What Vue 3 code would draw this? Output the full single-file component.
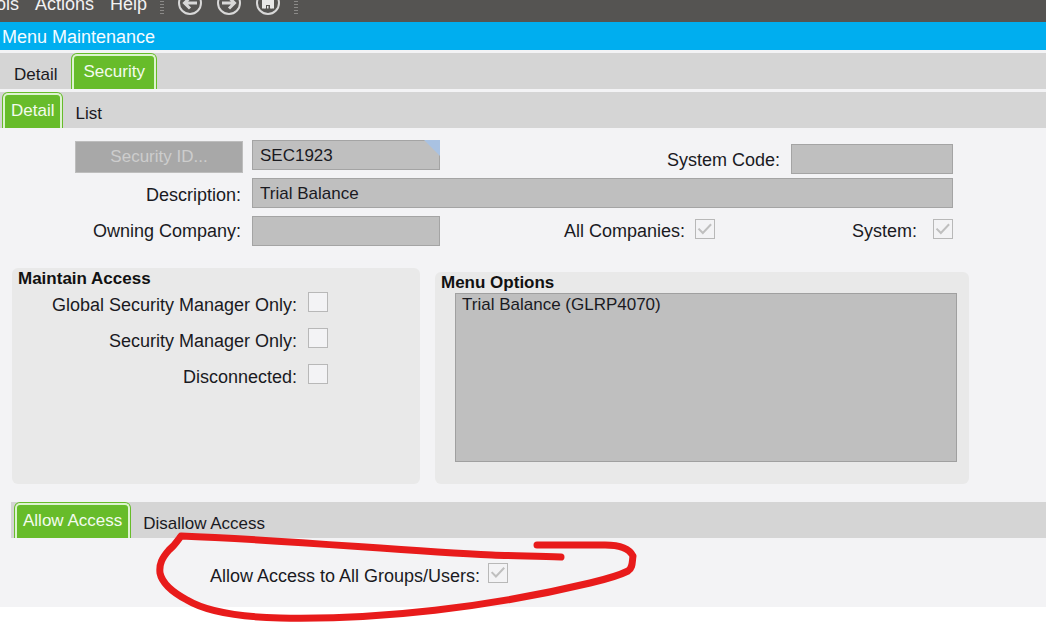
<script setup>
import { ref } from 'vue'

const mainTabs = ['Detail', 'Security']
const subTabs = ['Detail', 'List']
const accessTabs = ['Allow Access', 'Disallow Access']

const mainTab = ref('Security')
const subTab = ref('Detail')
const accessTab = ref('Allow Access')

const maintainOptions = [
  { id: 'global-manager', label: 'Global Security Manager Only:' },
  { id: 'manager', label: 'Security Manager Only:' },
  { id: 'disconnected', label: 'Disconnected:' }
]
const menuOptions = ['Trial Balance (GLRP4070)']
</script>

<template>
  <div class="page">
    <main class="window">
      <header class="toolbar">
        <nav class="menus">
          <button type="button">ols</button>
          <button type="button">Actions</button>
          <button type="button">Help</button>
        </nav>
        <span class="grip"></span>
        <div class="tools">
          <button type="button" aria-label="Back">
            <svg viewBox="0 0 26 26" width="26" height="26">
              <circle cx="13" cy="13" r="11" />
              <path class="arrow" d="M20 13H8M13 7.5L7.5 13L13 18.5" />
            </svg>
          </button>
          <button type="button" aria-label="Forward">
            <svg viewBox="0 0 26 26" width="26" height="26">
              <circle cx="13" cy="13" r="11" />
              <path class="arrow" d="M6 13H18M13 7.5L18.5 13L13 18.5" />
            </svg>
          </button>
          <button type="button" aria-label="Save">
            <svg viewBox="0 0 26 26" width="26" height="26">
              <circle cx="13" cy="13" r="11" />
              <path class="solid" d="M7 7H19V18.5H16.5V13.5H9.5V18.5H7Z" />
              <path class="solid" d="M9 12H17V18.5H15V15H11V18.5H9Z" />
              <path class="solid" d="M12 16H13.5V18.5H12Z" />
            </svg>
          </button>
        </div>
        <span class="grip"></span>
      </header>

      <h1 class="title">Menu Maintenance</h1>

      <div class="tabs main-tabs" role="tablist">
        <button v-for="t in mainTabs" :key="t" type="button" role="tab" class="tab"
          :class="{ active: t === mainTab }" :aria-selected="t === mainTab" @click="mainTab = t">{{ t }}</button>
      </div>
      <div class="tabs sub-tabs" role="tablist">
        <button v-for="t in subTabs" :key="t" type="button" role="tab" class="tab"
          :class="{ active: t === subTab }" :aria-selected="t === subTab" @click="subTab = t">{{ t }}</button>
      </div>

      <form class="form" @submit.prevent>
        <button type="button" class="lookup" disabled>Security ID...</button>
        <div class="key-field">
          <input class="field" type="text" value="SEC1923" aria-label="Security ID" readonly />
        </div>
        <label class="low" for="system-code">System Code:</label>
        <input id="system-code" class="field low" type="text" readonly />

        <label for="description">Description:</label>
        <input id="description" class="field wide" type="text" value="Trial Balance" readonly />

        <label for="company">Owning Company:</label>
        <input id="company" class="field" type="text" readonly />
        <div class="flags">
          <label for="all-companies">All Companies:</label>
          <input id="all-companies" class="check" type="checkbox" checked disabled />
          <label class="system" for="system">System:</label>
          <input id="system" class="check" type="checkbox" checked disabled />
        </div>
      </form>

      <div class="panels">
        <section class="panel maintain">
          <h2>Maintain Access</h2>
          <div class="options">
            <template v-for="o in maintainOptions" :key="o.id">
              <label :for="o.id">{{ o.label }}</label>
              <input :id="o.id" class="check" type="checkbox" disabled />
            </template>
          </div>
        </section>
        <section class="panel menu-options">
          <h2>Menu Options</h2>
          <ul class="list">
            <li v-for="m in menuOptions" :key="m">{{ m }}</li>
          </ul>
        </section>
      </div>

      <div class="tabs access-tabs" role="tablist">
        <button v-for="t in accessTabs" :key="t" type="button" role="tab" class="tab"
          :class="{ active: t === accessTab }" :aria-selected="t === accessTab" @click="accessTab = t">{{ t }}</button>
      </div>
      <div class="access-body">
        <label for="allow-all">Allow Access to All Groups/Users:</label>
        <input id="allow-all" class="check" type="checkbox" checked disabled />
        <svg class="marker" viewBox="155 532 485 90" width="485" height="90" aria-hidden="true">
          <path d="M561 557C535 556 515 556 492 555C400 551 290 540 181 536C178 540 175 545 169 550C162 558 159 564 160 573C162 583 172 592 187 600C207 612 240 617 280 618C380 620 490 607 590 583C607 579 620 575 628 571C633 568 632 562 633 556C630 550 622 545 605 545H537" />
        </svg>
      </div>
    </main>
  </div>
</template>

<style>
body {
  margin: 0;
  background: #fff;
}
</style>

<style scoped>
.page {
  padding-bottom: 16px;
}
.window {
  background: #f3f3f5;
  color: #1a1a1f;
  font: 18px/20px "Liberation Sans", Arial, sans-serif;
}
button,
input {
  font: inherit;
  color: inherit;
  box-sizing: border-box;
}
button {
  border: 0;
  padding: 0;
  background: none;
}
.toolbar {
  display: flex;
  align-items: flex-end;
  height: 22px;
  overflow: hidden;
  background: #555452;
  color: #f2f2f2;
}
.menus {
  display: flex;
  gap: 16px;
  margin-left: -4px;
  padding-bottom: 8px;
}
.grip {
  width: 4px;
  height: 18px;
  margin: 0 13px 6px;
  background: repeating-linear-gradient(#8b8a88 0 1px, #555452 1px 3px);
}
.tools {
  display: flex;
  gap: 13px;
  padding-bottom: 6px;
}
.tools svg {
  display: block;
  fill: none;
  stroke: #d8d8d8;
  stroke-width: 2;
}
.tools .arrow {
  stroke-width: 3;
}
.tools .solid {
  fill: #e8e8e8;
  stroke: none;
}
.title {
  margin: 0;
  padding: 5px 2px 3px;
  background: #00aeef;
  color: #f4fbff;
  font-size: 18px;
  font-weight: normal;
}
.tabs {
  display: flex;
  height: 36px;
  margin-top: 3px;
  padding-left: 2px;
  overflow: hidden;
  background: #d5d5d5;
  font-size: 17px;
}
.tab {
  padding: 7px 12px 0;
}
.tab.active {
  margin: 1px 1px 0;
  padding: 0 6px 2px;
  border: 2px solid #ddf3cf;
  border-bottom: 0;
  border-radius: 5px 5px 0 0;
  background: #67bc2a;
  box-shadow: 0 0 0 1px #67bc2a;
  color: #f3fbee;
}
.main-tabs .tab.active {
  margin-left: 3px;
  padding: 0 9px 2px;
}
.form {
  display: grid;
  grid-template-columns: 168px 188px 1fr 162px;
  grid-template-rows: 34px 34px 30px;
  gap: 4px 9px;
  padding: 12px 93px 22px 75px;
}
.form label {
  align-self: center;
  justify-self: end;
  padding-right: 2px;
}
.form .low {
  align-self: end;
}
.form label.low {
  padding-bottom: 4px;
}
.lookup {
  height: 32px;
  align-self: center;
  background: #a8a8a8;
  border: 1px solid #bdbdbd;
  color: #cdcdcd;
  font-size: 17px;
}
.field {
  width: 100%;
  height: 30px;
  margin: 0;
  padding: 2px 7px 0;
  border: 1px solid #a4a4a4;
  border-radius: 0;
  outline: 0;
  background: #bfbfbf;
  font-size: 17px;
}
.key-field {
  position: relative;
}
.key-field::after {
  content: "";
  position: absolute;
  top: 0;
  right: 0;
  width: 16px;
  height: 16px;
  background: #a9c2e2;
  clip-path: polygon(0 0, 100% 0, 100% 100%);
}
.wide {
  grid-column: 2 / -1;
}
.flags {
  grid-column: 3 / -1;
  display: flex;
  justify-content: flex-end;
  gap: 8px;
}
.flags .check {
  margin-top: 3px;
}
.flags .system {
  margin-left: 129px;
  padding-right: 8px;
}
.check {
  appearance: none;
  flex: none;
  width: 20px;
  height: 20px;
  margin: 0;
  border: 1px solid #b8b8b8;
  background: #f3f3f5;
}
.check:checked::after {
  content: "";
  display: block;
  width: 18px;
  height: 18px;
  background: #bfbfbf;
  clip-path: polygon(10% 52%, 18% 44%, 38% 64%, 80% 20%, 88% 28%, 38% 80%);
}
.panels {
  display: grid;
  grid-template-columns: 408fr 534fr;
  gap: 15px;
  padding: 0 77px 15px 12px;
}
.panel {
  border-radius: 6px;
  background: #e9e9e9;
}
.maintain {
  min-height: 216px;
}
.menu-options {
  margin-top: 4px;
}
h2 {
  margin: 0;
  padding: 1px 6px 0;
  font-size: 17px;
  color: #111;
}
.options {
  display: grid;
  grid-template-columns: 285px 20px;
  gap: 16px 11px;
  padding-top: 3px;
}
.options label {
  justify-self: end;
  padding-top: 3px;
  height: 17px;
}
.list {
  height: 169px;
  box-sizing: border-box;
  margin: 0 12px 0 20px;
  padding: 1px 6px;
  border: 1px solid #a0a0a0;
  background: #bfbfbf;
  list-style: none;
  font-size: 17px;
}
.list li {
  line-height: 20px;
}
.access-tabs {
  margin-left: 11px;
  padding-left: 3px;
}
.access-body {
  position: relative;
  display: flex;
  align-items: center;
  gap: 8px;
  height: 69px;
  padding-left: 210px;
}
.access-body label {
  padding-top: 6px;
}
.marker {
  position: absolute;
  left: 155px;
  top: -6px;
  fill: none;
  stroke: #e81b1b;
  stroke-width: 7;
  stroke-linecap: round;
  stroke-linejoin: round;
  pointer-events: none;
}
</style>
